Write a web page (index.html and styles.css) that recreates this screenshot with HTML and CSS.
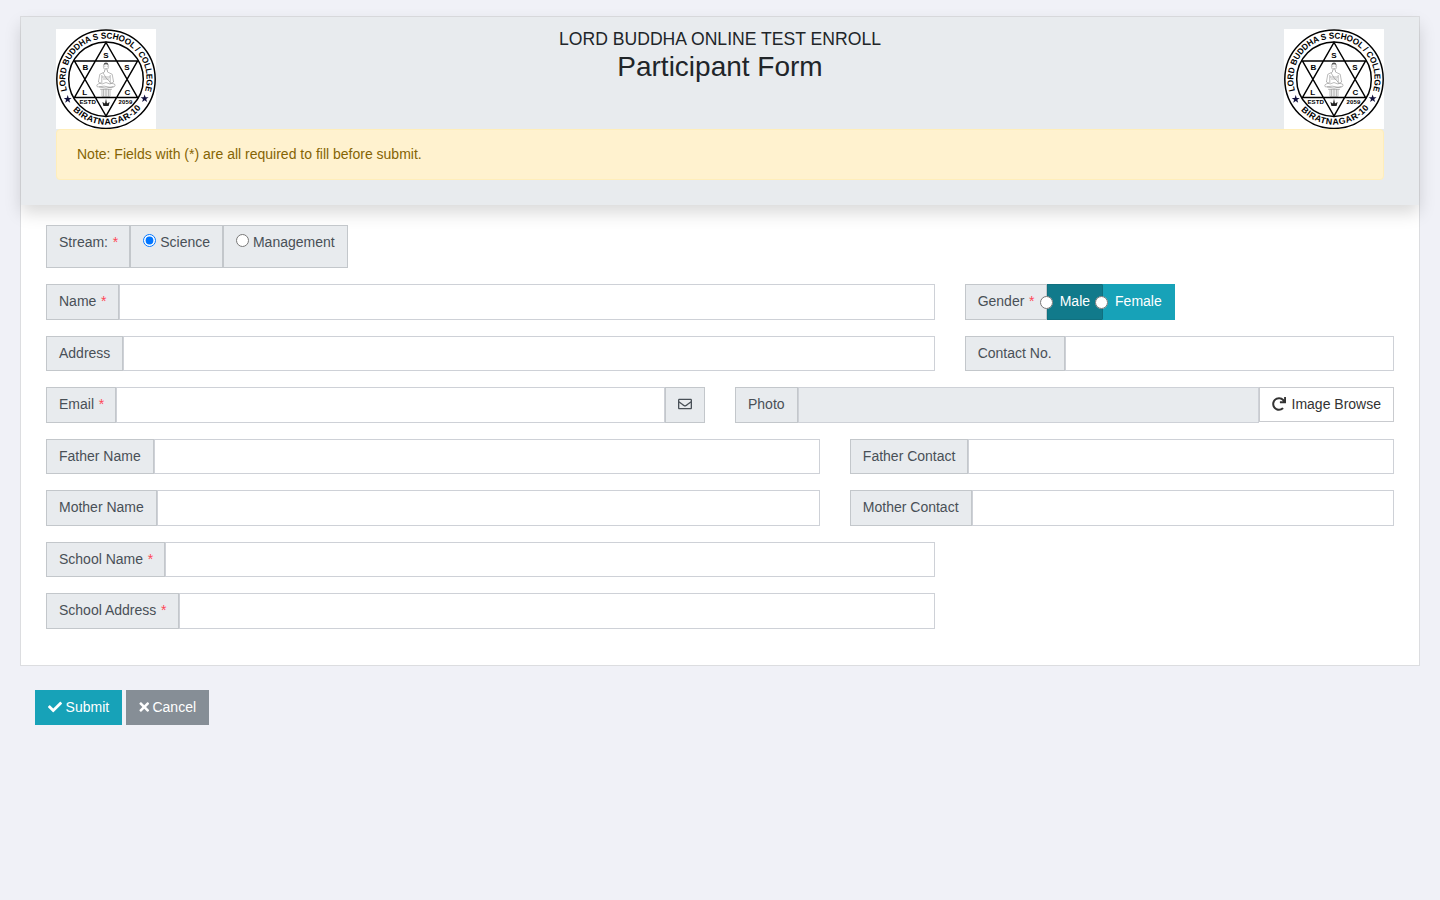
FILE: index.html
```html
<!DOCTYPE html>
<html lang="en">
<head>
<meta charset="utf-8">
<title>Participant Form</title>
<link rel="stylesheet" href="styles.css">
</head>
<body>
<svg class="defs" width="0" height="0" aria-hidden="true">
  <defs>
    <path id="ring-top" d="M11.09 61.7A40.6 40.6 0 1 1 88.9 61.7"/>
    <path id="ring-bottom" d="M16.9 81.2A45.3 45.3 0 0 0 85.8 78.2"/>
    <path id="star" d="M0-4.2L1-1.3H4L1.6.5L2.5 3.4L0 1.6L-2.5 3.4L-1.6.5L-4-1.3H-1Z"/>
    <symbol id="seal" viewBox="0 0 100 100">
      <rect width="100" height="100" fill="#fff"/>
      <g fill="none" stroke="#000">
        <circle cx="50" cy="50.2" r="49.2" stroke-width="1.5"/>
        <circle cx="50" cy="50.2" r="37.3" stroke-width="1.5"/>
        <path d="M50 13.5L81.5 68.5H18.5ZM50 87L18.5 32H81.5Z" stroke-width="1.5"/>
      </g>
      <g class="seal-text">
        <text font-size="8.6"><textPath href="#ring-top" startOffset="0" textLength="151" lengthAdjust="spacingAndGlyphs">LORD BUDDHA S SCHOOL / COLLEGE</textPath></text>
        <text font-size="8.8"><textPath href="#ring-bottom" startOffset="0" textLength="77">BIRATNAGAR-10</textPath></text>
        <g font-size="8" text-anchor="middle">
          <text x="50" y="29.2">S</text><text x="29.3" y="41.2">B</text><text x="71" y="41.2">S</text>
          <text x="28.7" y="66.2">L</text><text x="71.3" y="66.2">C</text>
        </g>
        <text x="23.5" y="75" font-size="6" textLength="16.3" lengthAdjust="spacingAndGlyphs">ESTD</text>
        <text x="62.5" y="75" font-size="6" textLength="13.8">2059</text>
      </g>
      <use href="#star" x="11.7" y="70.3" fill="#10103c"/>
      <use href="#star" x="88.6" y="69.6" fill="#10103c"/>
      <g fill="none" stroke="#777" stroke-width=".5">
        <path d="M47.4 37.5Q47 34.5 50 34.3Q53 34.5 52.6 37.5Q52.4 40.8 50 41Q47.6 40.8 47.4 37.5M48.5 41V43L43.8 45.3L42.4 53L46 55M51.5 41V43L56.2 45.3L57.6 53L54 55M45.8 46V54M54.2 46V54M47 43.8Q50 50 54 53M46 55Q50 52 54 55"/>
        <path d="M45 54Q39 55.5 41.5 58Q48 56 55 58.5Q60.5 58 58.5 55L54 54M43 58Q50 60.5 57.5 57.5M44 60.3H56M46 60.3V67.5H54V60.3M47.5 60.3V67.5M49.2 60.3V67.5M50.8 60.3V67.5M52.5 60.3V67.5"/>
        <path d="M48 37.2H49.5M50.8 37.2H52M49.2 39.5H51M46 48H54M47 50H53"/>
      </g>
      <path d="M47.8 35.8Q47.7 33.6 50 33.5Q52.3 33.6 52.2 35.8Q50 34.5 47.8 35.8" fill="#555"/>
      <path d="M46.4 73L49 74.5L50 69.8L51 74.5L53.6 73L52.6 77H47.4Z" fill="#222"/>
    </symbol>
  </defs>
</svg>

<form class="page">
  <section class="card">
    <header class="card-head">
      <div class="banner">
        <svg class="logo" role="img" aria-label="School seal"><use href="#seal"/></svg>
        <div class="titles">
          <h2 class="org">LORD BUDDHA ONLINE TEST ENROLL</h2>
          <h1 class="title">Participant Form</h1>
        </div>
        <svg class="logo" role="img" aria-label="School seal"><use href="#seal"/></svg>
      </div>
      <div class="note">Note: Fields with (*) are all required to fill before submit.</div>
    </header>

    <div class="card-body">
      <div class="row stream">
        <span class="addon">Stream: <i class="req">*</i></span>
        <label class="addon"><input class="radio" type="radio" name="stream" checked> Science</label>
        <label class="addon"><input class="radio" type="radio" name="stream"> Management</label>
      </div>
      <div class="row">
        <div class="group w8"><span class="addon">Name <i class="req">*</i></span><input class="field" type="text"></div>
        <div class="group"><span class="addon gender">Gender <i class="req">*</i></span>
          <label class="btn info toggle active"><input class="radio" type="radio" name="gender">Male</label>
          <label class="btn info toggle"><input class="radio" type="radio" name="gender">Female</label>
        </div>
      </div>
      <div class="row">
        <div class="group w8"><span class="addon">Address</span><input class="field" type="text"></div>
        <div class="group"><span class="addon">Contact No.</span><input class="field" type="text"></div>
      </div>
      <div class="row">
        <div class="group w6"><span class="addon">Email <i class="req">*</i></span><input class="field" type="text"><span class="addon mail"><svg class="icon" viewBox="0 0 512 512"><path fill="currentColor" d="M464 64H48C21.49 64 0 85.49 0 112v288c0 26.51 21.49 48 48 48h416c26.51 0 48-21.49 48-48V112c0-26.51-21.49-48-48-48zm0 48v40.805c-22.422 18.259-58.168 46.651-134.587 106.49-16.841 13.247-50.201 45.072-73.413 44.701-23.208.375-56.579-31.459-73.413-44.701C106.18 199.465 70.425 171.067 48 152.805V112h416zM48 400V214.398c22.914 18.251 55.409 43.862 104.938 82.646 21.857 17.205 60.134 55.186 103.062 54.955 42.717.231 80.509-37.199 103.053-54.947 49.528-38.783 82.032-64.401 104.947-82.653V400H48z"/></svg></span></div>
        <div class="group"><span class="addon">Photo</span><input class="field readonly" type="text" readonly><button class="btn browse" type="button"><svg class="icon" viewBox="0 0 512 512"><path fill="currentColor" d="M500.33 0h-47.41a12 12 0 0 0-12 12.57l4 82.76A247.42 247.42 0 0 0 256 8C119.34 8 7.9 119.53 8 256.19 8.1 393.07 119.1 504 256 504a247.1 247.1 0 0 0 166.18-63.91 12 12 0 0 0 .48-17.43l-34-34a12 12 0 0 0-16.38-.55A176 176 0 1 1 402.1 157.8l-101.53-4.87a12 12 0 0 0-12.57 12v47.41a12 12 0 0 0 12 12h200.33a12 12 0 0 0 12-12V12a12 12 0 0 0-12-12z"/></svg>Image Browse</button></div>
      </div>
      <div class="row">
        <div class="group w7"><span class="addon">Father Name</span><input class="field" type="text"></div>
        <div class="group"><span class="addon">Father Contact</span><input class="field" type="text"></div>
      </div>
      <div class="row">
        <div class="group w7"><span class="addon">Mother Name</span><input class="field" type="text"></div>
        <div class="group"><span class="addon">Mother Contact</span><input class="field" type="text"></div>
      </div>
      <div class="row">
        <div class="group w8"><span class="addon">School Name <i class="req">*</i></span><input class="field" type="text"></div>
      </div>
      <div class="row">
        <div class="group w8"><span class="addon">School Address <i class="req">*</i></span><input class="field" type="text"></div>
      </div>
    </div>
  </section>

  <div class="actions">
    <button class="btn info" type="button"><svg class="icon" viewBox="0 0 512 512"><path fill="currentColor" d="M173.898 439.404l-166.4-166.4c-9.997-9.997-9.997-26.206 0-36.204l36.203-36.204c9.997-9.998 26.207-9.998 36.204 0L192 312.69 432.095 72.596c9.997-9.997 26.207-9.997 36.204 0l36.203 36.204c9.997 9.997 9.997 26.206 0 36.204l-294.4 294.401c-9.998 9.997-26.207 9.997-36.204-.001z"/></svg>Submit</button>
    <button class="btn gray" type="button"><svg class="icon narrow" viewBox="0 0 352 512"><path fill="currentColor" d="M242.72 256l100.07-100.07c12.28-12.28 12.28-32.19 0-44.48l-22.24-22.24c-12.28-12.28-32.19-12.28-44.48 0L176 189.28 75.93 89.21c-12.28-12.28-32.19-12.28-44.48 0L9.21 111.45c-12.28 12.28-12.28 32.19 0 44.48L109.28 256 9.21 356.07c-12.28 12.28-12.28 32.19 0 44.48l22.24 22.24c12.28 12.28 32.2 12.28 44.48 0L176 322.72l100.07 100.07c12.28 12.28 32.2 12.28 44.48 0l22.24-22.24c12.28-12.28 12.28-32.19 0-44.48L242.72 256z"/></svg>Cancel</button>
  </div>
</form>
</body>
</html>
```
FILE: styles.css
```css
* { box-sizing: border-box; }
body {
  margin: 0;
  background: #f0f1f7;
  color: #212529;
  font: 14px/21px "Liberation Sans", Arial, sans-serif;
}
.defs { position: absolute; }
.page { padding: 16px 20px; }
.card {
  height: 650px;
  background: #fff;
  border: 1px solid #dcdde0;
}
.card-head {
  height: 188px;
  padding: 12px 35px 0;
  background: #e8ebee;
  box-shadow: 0 8px 16px rgba(0, 0, 0, .15);
}
.banner { display: flex; justify-content: space-between; height: 100px; }
.logo { display: block; width: 100px; height: 100px; }
.seal-text { font-family: "Liberation Sans", Arial, sans-serif; font-weight: bold; fill: #000; }
.titles { text-align: center; }
.org, .title { margin: 0; font-weight: 400; }
.org { font-size: 17.6px; line-height: 21px; }
.title { font-size: 28px; line-height: 34px; }
.note {
  height: 51px;
  padding: 14px 20px;
  border: 1px solid #ffeeba;
  border-radius: 4px;
  background: #fff2cf;
  color: #856404;
}
.card-body { padding: 20px 25px; display: flex; flex-direction: column; gap: 16px; }
.row { display: flex; gap: 30px; height: 35.5px; }
.group { display: flex; flex: 1; min-width: 0; }
.w8 { flex: 0 0 888.67px; }
.w7 { flex: 0 0 773.83px; }
.w6 { flex: 0 0 659px; }
.addon {
  padding: 6px 12px;
  border: 1px solid #c3c7cb;
  background: #e8ebee;
  color: #495057;
  white-space: nowrap;
}
.req { margin: 0 -.8px 0 .8px; color: #ff4757; font-style: normal; }
.stream { height: 43px; gap: 0; }
.field {
  flex: 1;
  min-width: 0;
  padding: 6px 12px;
  border: 1px solid #ced1d7;
  background: #fff;
  font: inherit;
}
.readonly { background: #e8ebee; }
.radio { width: 13px; height: 13px; margin: 0; }
.btn {
  height: 35px;
  padding: 6px 12px;
  border: 1px solid transparent;
  color: #fff;
  font: inherit;
  white-space: nowrap;
}
.icon { width: 14px; height: 14px; margin-right: 3.6px; vertical-align: -2px; }
.narrow { width: 10.5px; margin-right: 3px; }
.mail .icon { margin: 0; }
.info { background: #17a2b8; border-color: #17a2b8; }
.gray { background: #868e96; border-color: #868e96; }
.browse { background: #fff; border-color: #c9cbcf; color: #333; }
.browse .icon { margin-right: 5.8px; }
.toggle { position: relative; height: 35.5px; }
.toggle .radio { position: absolute; left: -8px; top: 11px; z-index: 1; }
.toggle + .toggle { margin-left: -1px; }
.active { background: #117a8b; border-color: #10707f; z-index: 1; }
.toggle:not(.active) { z-index: 2; border-left-color: #10707f; }
.actions { display: flex; gap: 3.8px; padding: 24px 15px; }
```
